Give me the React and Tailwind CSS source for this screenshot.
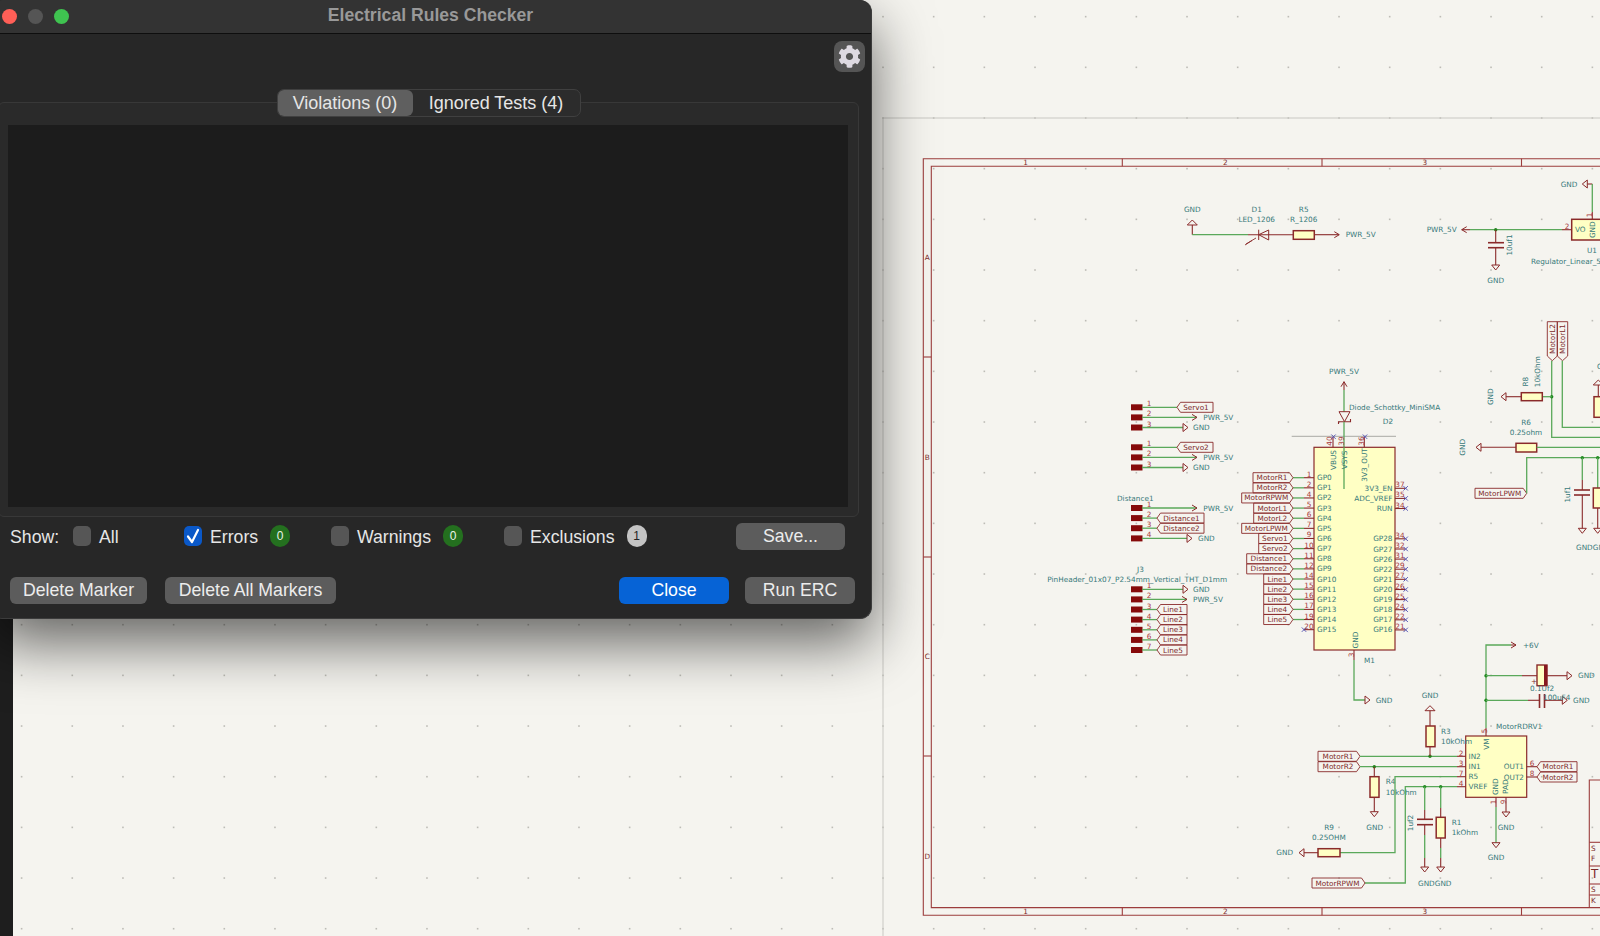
import React from "react";
import { FaCog } from "react-icons/fa";

const RED = "#8a2a2a";
const GREEN = "#5aa85a";
const TEAL = "#37797a";
const LBL = "#7d2a2a";
const PIN = "#a83a3a";
const FILL = "#ffffc4";

const W = ({ p }) => <polyline points={p} fill="none" stroke={GREEN} strokeWidth="1.3" />;
const R = ({ p, w = 1.1 }) => <polyline points={p} fill="none" stroke={RED} strokeWidth={w} />;
const T = ({ x, y, a = "start", c = TEAL, rot, s = 7.3, children }) => (
  <text
    x={x}
    y={y}
    textAnchor={a}
    dominantBaseline="central"
    fill={c}
    fontSize={s}
    fontFamily="'DejaVu Sans', sans-serif"
    transform={rot ? `rotate(-90 ${x} ${y})` : undefined}
  >
    {children}
  </text>
);
const J = ({ x, y }) => <circle cx={x} cy={y} r="1.7" fill="#1f8a1f" />;
const N = ({ x, y, a = "middle", rot, children }) => (
  <T x={x} y={y} a={a} c={PIN} rot={rot} s={7.3}>{children}</T>
);
const X = ({ x: xs, y: ys }) => {
  const x = Number(xs);
  const y = Number(ys);
  return (
    <g stroke="#4a4ab0" strokeWidth="0.9">
      <line x1={x - 2.2} y1={y - 2.2} x2={x + 2.2} y2={y + 2.2} />
      <line x1={x - 2.2} y1={y + 2.2} x2={x + 2.2} y2={y - 2.2} />
    </g>
  );
};
const G = ({ x: xs, y: ys, d }) => {
  const x = Number(xs);
  const y = Number(ys);
  const pts = {
    r: `${x},${y - 4} ${x + 5},${y} ${x},${y + 4}`,
    l: `${x},${y - 4} ${x - 5},${y} ${x},${y + 4}`,
    d: `${x - 4},${y} ${x},${y + 5} ${x + 4},${y}`,
    u: `${x - 5},${y} ${x},${y - 5} ${x + 5},${y}`,
  }[d];
  return <polygon points={pts} fill="none" stroke={RED} strokeWidth="1" />;
};
const A = ({ x: xs, y: ys, d }) => {
  const x = Number(xs);
  const y = Number(ys);
  const pts = {
    r: `${x - 5},${y - 3} ${x},${y} ${x - 5},${y + 3}`,
    l: `${x + 5},${y - 3} ${x},${y} ${x + 5},${y + 3}`,
    u: `${x - 3},${y + 5} ${x},${y} ${x + 3},${y + 5}`,
  }[d];
  return <polyline points={pts} fill="none" stroke={RED} strokeWidth="1" />;
};
const LR = ({ x0: a, tip: b, y: c, t }) => {
  const x0 = Number(a);
  const tip = Number(b);
  const y = Number(c);
  return (
    <g>
      <polygon
        points={`${x0},${y - 5} ${tip - 3.5},${y - 5} ${tip},${y} ${tip - 3.5},${y + 5} ${x0},${y + 5}`}
        fill="none"
        stroke={RED}
        strokeWidth="0.9"
      />
      <T x={(x0 + tip - 2) / 2} y={y} a="middle" c={LBL}>{t}</T>
    </g>
  );
};
const LL = ({ tip: a, x1: b, y: c, t }) => {
  const tip = Number(a);
  const x1 = Number(b);
  const y = Number(c);
  return (
    <g>
      <polygon
        points={`${tip},${y} ${tip + 3.5},${y - 5} ${x1},${y - 5} ${x1},${y + 5} ${tip + 3.5},${y + 5}`}
        fill="none"
        stroke={RED}
        strokeWidth="0.9"
      />
      <T x={(tip + x1 + 2) / 2} y={y} a="middle" c={LBL}>{t}</T>
    </g>
  );
};
const Res = ({ x, y, w, h }) => (
  <rect x={x} y={y} width={w} height={h} fill={FILL} stroke={RED} strokeWidth="1.5" />
);
const Pad = ({ y }) => <rect x="1131" y={y - 3} width="11.5" height="6" fill="#860a0a" />;

const leftPins = [
  ["GP0", "1", "MotorR1", 1253],
  ["GP1", "2", "MotorR2", 1253],
  ["GP2", "4", "MotorRPWM", 1241.7],
  ["GP3", "5", "MotorL1", 1253.7],
  ["GP4", "6", "MotorL2", 1253.7],
  ["GP5", "7", "MotorLPWM", 1241.7],
  ["GP6", "9", "Servo1", 1258.7],
  ["GP7", "10", "Servo2", 1258.7],
  ["GP8", "11", "Distance1", 1246.7],
  ["GP9", "12", "Distance2", 1246.7],
  ["GP10", "14", "Line1", 1263.7],
  ["GP11", "15", "Line2", 1263.7],
  ["GP12", "16", "Line3", 1263.7],
  ["GP13", "17", "Line4", 1263.7],
  ["GP14", "19", "Line5", 1263.7],
  ["GP15", "20", null, 0],
];
const rightPins = [
  ["3V3_EN", "37", 488.3],
  ["ADC_VREF", "35", 498.4],
  ["RUN", "34", 508.5],
  ["GP28", "34", 538.8],
  ["GP27", "32", 549],
  ["GP26", "31", 559.1],
  ["GP22", "29", 569.2],
  ["GP21", "27", 579.3],
  ["GP20", "26", 589.5],
  ["GP19", "25", 599.6],
  ["GP18", "24", 609.7],
  ["GP17", "22", 619.8],
  ["GP16", "21", 629.9],
];

function Connector({ rows }) {
  return rows.map((r, i) => (
    <g key={i}>
      <Pad y={r.y} />
      <W p={`1142,${r.y} ${r.to},${r.y}`} />
      <N x="1149" y={r.y - 3.5}>{i + 1}</N>
      {r.label && <LL tip={r.to} x1={r.end} y={r.y} t={r.label} />}
      {r.gnd && <><G x={r.to} y={r.y} d="r" /><T x={r.tx} y={r.y}>GND</T></>}
      {r.pwr && <><A x={r.to} y={r.y} d="r" /><T x={r.tx} y={r.y}>PWR_5V</T></>}
    </g>
  ));
}

function Schematic() {
  const dots = [];
  for (let i = -18; i < 15; i++) {
    for (let j = -2; j < 17; j++) {
      dots.push(<rect key={`${i}-${j}`} x={883 + i * 50.67 - 0.8} y={118 + j * 50.67 - 0.8} width="1.6" height="1.6" fill="#bdbcb6" />);
    }
  }
  const ticksX = [1122.3, 1322, 1521.5];
  const ticksY = [357, 557, 756];
  return (
    <svg viewBox="13 0 1587 936" className="block w-full h-full">
      {dots}
      <line x1="883" y1="118" x2="1600" y2="118" stroke="#c9c8c3" strokeWidth="1" />
      <line x1="883" y1="118" x2="883" y2="936" stroke="#c9c8c3" strokeWidth="1" />

      {/* Sheet frame */}
      <g fill="none" stroke="#9c3c3c" strokeWidth="1.1">
        <polyline points="1600,158.7 923.3,158.7 923.3,915.3 1600,915.3" />
        <polyline points="1600,166.3 931.3,166.3 931.3,907.6 1600,907.6" />
        {ticksX.map((x) => (
          <g key={x}>
            <line x1={x} y1="158.7" x2={x} y2="166.3" />
            <line x1={x} y1="907.6" x2={x} y2="915.3" />
          </g>
        ))}
        {ticksY.map((y) => <line key={y} x1="923.3" y1={y} x2="931.3" y2={y} />)}
      </g>
      {["1", "2", "3"].map((t, i) => (
        <g key={t}>
          <T x={1025.7 + i * 199.6} y="162.6" a="middle" c={LBL}>{t}</T>
          <T x={1025.7 + i * 199.6} y="911.5" a="middle" c={LBL}>{t}</T>
        </g>
      ))}
      {["A", "B", "C", "D"].map((t, i) => (
        <T key={t} x="927.3" y={257.5 + i * 199.5} a="middle" c={LBL}>{t}</T>
      ))}

      {/* Title block */}
      <g fill="none" stroke="#9c3c3c" strokeWidth="1.1">
        <polyline points="1600,780 1589.3,780 1589.3,907.6" />
        <line x1="1589.3" y1="842.3" x2="1600" y2="842.3" />
        <line x1="1589.3" y1="866" x2="1600" y2="866" />
        <line x1="1589.3" y1="884" x2="1600" y2="884" />
        <line x1="1589.3" y1="895" x2="1600" y2="895" />
      </g>
      <T x="1591" y="848" c={LBL}>S</T>
      <T x="1591" y="858.7" c={LBL}>F</T>
      <T x="1591" y="874" c={LBL} s={12}>T</T>
      <T x="1591" y="889" c={LBL}>S</T>
      <T x="1591" y="900" c={LBL}>K</T>

      {/* LED */}
      <T x="1192.3" y="209.3" a="middle">GND</T>
      <G x="1192.3" y="225" d="u" />
      <R p="1192.3,225 1192.3,234.7" />
      <W p="1192.3,234.7 1248,234.7" />
      <R p="1248,234.7 1293.3,234.7" />
      <polygon points="1268.7,230 1258.7,234.7 1268.7,240" fill="none" stroke={RED} strokeWidth="1" />
      <line x1="1258.7" y1="229.7" x2="1258.7" y2="240" stroke={RED} strokeWidth="1" />
      <R p="1256,238 1246,244" w={0.9} />
      <R p="1252,240.5 1245,245" w={0.9} />
      <T x="1256.7" y="209.3" a="middle">D1</T>
      <T x="1256.7" y="219.3" a="middle">LED_1206</T>
      <T x="1303.7" y="209.3" a="middle">R5</T>
      <T x="1303.7" y="219.3" a="middle">R_1206</T>
      <Res x="1293.3" y="230.7" w="21" h="8.6" />
      <R p="1314.3,234.7 1339,234.7" />
      <A x="1339.3" y="234.7" d="r" />
      <T x="1345.7" y="234.7">PWR_5V</T>

      {/* Regulator */}
      <T x="1569" y="184" a="middle">GND</T>
      <G x="1587.3" y="184" d="l" />
      <R p="1587.3,184 1592.3,184" />
      <W p="1592.3,184 1592.3,212" />
      <R p="1592.3,212 1592.3,219.3" />
      <N x="1589" y="215" rot>1</N>
      <rect x="1571.7" y="219.3" width="40" height="20.7" fill={FILL} stroke={RED} strokeWidth="1.5" />
      <T x="1575" y="229.7">VO</T>
      <T x="1592.3" y="229.7" a="middle" rot>GND</T>
      <N x="1567" y="226">2</N>
      <A x="1461.7" y="229.7" d="l" />
      <R p="1461.7,229.7 1470,229.7" />
      <W p="1470,229.7 1562,229.7" />
      <R p="1562,229.7 1571.7,229.7" />
      <T x="1426.7" y="229.7">PWR_5V</T>
      <J x="1495.7" y="229.7" />
      <R p="1495.7,229.7 1495.7,242.7" />
      <R p="1488,242.7 1504,242.7" w={1.6} />
      <R p="1488,247.7 1504,247.7" w={1.6} />
      <R p="1495.7,247.7 1495.7,265" />
      <G x="1495.7" y="265" d="d" />
      <T x="1495.7" y="280" a="middle">GND</T>
      <T x="1509.3" y="245" a="middle" rot>10uf1</T>
      <T x="1592" y="250" a="middle">U1</T>
      <T x="1531" y="261.3">Regulator_Linear_5V</T>

      {/* Motor L */}
      <polygon points="1547.3,321.7 1557.3,321.7 1557.3,356 1552.3,360.7 1547.3,356" fill="none" stroke={RED} strokeWidth="0.9" />
      <polygon points="1557.3,321.7 1567.7,321.7 1567.7,356 1562.5,360.7 1557.3,356" fill="none" stroke={RED} strokeWidth="0.9" />
      <T x="1552.3" y="339" a="middle" c={LBL} rot>MotorL2</T>
      <T x="1562.5" y="339" a="middle" c={LBL} rot>MotorL1</T>
      <W p="1551.7,360.7 1551.7,437.3 1600,437.3" />
      <W p="1562.3,360.7 1562.3,427.3 1600,427.3" />
      <J x="1551.7" y="396.7" />
      <W p="1542.3,396.7 1551.7,396.7" />
      <Res x="1521.3" y="392.7" w="21" h="8" />
      <R p="1506,396.7 1521.3,396.7" />
      <G x="1506" y="396.7" d="l" />
      <T x="1491" y="396.7" a="middle" rot>GND</T>
      <T x="1526" y="381.7" a="middle" rot>R8</T>
      <T x="1537.3" y="371.7" a="middle" rot>10kOhm</T>
      <T x="1597" y="366.7">G</T>
      <G x="1598.3" y="385" d="u" />
      <R p="1598.3,385 1598.3,397" />
      <Res x="1594" y="396.7" w="10" h="20.6" />
      <T x="1526" y="422.3" a="middle">R6</T>
      <T x="1526" y="432.3" a="middle">0.25ohm</T>
      <Res x="1516" y="443.3" w="20.7" h="8.7" />
      <R p="1481,447.3 1516,447.3" />
      <G x="1481" y="447.3" d="l" />
      <T x="1462.3" y="447.3" a="middle" rot>GND</T>
      <W p="1536.7,447.3 1600,447.3" />
      <LR x0="1475" tip="1526.7" y="493.3" t="MotorLPWM" />
      <W p="1526.7,493.3 1526.7,457.7 1600,457.7" />
      <J x="1582.3" y="457.7" />
      <J x="1597.7" y="457.7" />
      <W p="1582.3,457.7 1582.3,480" />
      <R p="1582.3,480 1582.3,490" />
      <R p="1574,490 1590,490" w={1.6} />
      <R p="1574,495 1590,495" w={1.6} />
      <R p="1582.3,495 1582.3,528.3" />
      <G x="1582.3" y="528.3" d="d" />
      <T x="1567.7" y="494.3" a="middle" rot>1uf1</T>
      <W p="1597.7,457.7 1597.7,488" />
      <Res x="1593.3" y="488" w="10" h="20" />
      <R p="1597.7,508 1597.7,528.3" />
      <G x="1597.7" y="528.3" d="d" />
      <T x="1576" y="547.7">GNDGND</T>

      {/* Connectors */}
      <Connector rows={[
        { y: 407.3, to: 1177, label: "Servo1", end: 1213 },
        { y: 417.4, to: 1197, pwr: true, tx: 1203.3 },
        { y: 427.5, to: 1183, gnd: true, tx: 1193 },
      ]} />
      <Connector rows={[
        { y: 447.3, to: 1177, label: "Servo2", end: 1213 },
        { y: 457.4, to: 1197, pwr: true, tx: 1203.3 },
        { y: 467.5, to: 1183, gnd: true, tx: 1193 },
      ]} />
      <T x="1117" y="498">Distance1</T>
      <Connector rows={[
        { y: 508, to: 1197, pwr: true, tx: 1203.3 },
        { y: 518.1, to: 1157, label: "Distance1", end: 1204 },
        { y: 528.2, to: 1157, label: "Distance2", end: 1204 },
        { y: 538.4, to: 1187, gnd: true, tx: 1198 },
      ]} />
      <T x="1137" y="569">J3</T>
      <T x="1227" y="579" a="end">PinHeader_01x07_P2.54mm_Vertical_THT_D1mm</T>
      <Connector rows={[
        { y: 589.3, to: 1183, gnd: true, tx: 1193 },
        { y: 599.4, to: 1187, pwr: true, tx: 1193 },
        { y: 609.5, to: 1157, label: "Line1", end: 1187 },
        { y: 619.6, to: 1157, label: "Line2", end: 1187 },
        { y: 629.8, to: 1157, label: "Line3", end: 1187 },
        { y: 639.9, to: 1157, label: "Line4", end: 1187 },
        { y: 650, to: 1157, label: "Line5", end: 1187 },
      ]} />

      {/* Pico M1 */}
      <line x1="1291.7" y1="436.3" x2="1396" y2="436.3" stroke="#a9a9a4" strokeWidth="1" />
      <T x="1344" y="371" a="middle">PWR_5V</T>
      <A x="1344" y="381.7" d="u" />
      <R p="1344,381.7 1344,390" />
      <W p="1344,390 1344,411.7" />
      <polygon points="1339,411.7 1350,411.7 1344.5,421.7" fill="none" stroke={RED} strokeWidth="1" />
      <R p="1338.5,424 1338.5,421.7 1350.5,421.7 1350.5,419" />
      <W p="1344,421.7 1344,447.3" />
      <T x="1349" y="407">Diode_Schottky_MiniSMA</T>
      <T x="1388" y="421" a="middle">D2</T>
      <rect x="1314" y="447.3" width="81" height="202.7" fill={FILL} stroke={RED} strokeWidth="1.2" />
      <W p="1344,447.3 1344,489" />
      <R p="1333,437 1333,447.3" />
      <R p="1364.3,437 1364.3,447.3" />
      <X x="1333.5" y="436.7" />
      <X x="1365" y="436.7" />
      <N x="1329.5" y="441" rot>40</N>
      <N x="1341" y="441" rot>39</N>
      <N x="1361" y="441" rot>36</N>
      <T x="1333.5" y="460" a="middle" rot>VBUS</T>
      <T x="1344.5" y="460" a="middle" rot>VSYS</T>
      <T x="1364.3" y="465" a="middle" rot>3V3_OUT</T>
      <T x="1355" y="640" a="middle" rot>GND</T>
      {leftPins.map(([name, num, lbl, x0], i) => {
        const y = 477.7 + i * 10.13;
        return (
          <g key={name}>
            <R p={`1304,${y} 1314,${y}`} />
            <N x="1309" y={y - 3.5}>{num}</N>
            <T x="1317" y={y}>{name}</T>
            {lbl ? (
              <>
                <W p={`1293,${y} 1304,${y}`} />
                <LR x0={x0} tip={1293} y={y} t={lbl} />
              </>
            ) : (
              <X x={1304} y={y} />
            )}
          </g>
        );
      })}
      {rightPins.map(([name, num, y]) => (
        <g key={name}>
          <R p={`1395,${y} 1405,${y}`} />
          <N x="1400" y={y - 3.5}>{num}</N>
          <T x="1392.5" y={y} a="end">{name}</T>
          <X x={1405.7} y={y} />
        </g>
      ))}
      <R p="1354,650 1354,660" />
      <W p="1354,660 1354,700 1365,700" />
      <N x="1351" y="655" rot>3</N>
      <T x="1364" y="660">M1</T>
      <G x="1365" y="700" d="r" />
      <T x="1375.7" y="700">GND</T>

      {/* Motor driver power */}
      <W p="1486,728 1486,645 1511,645" />
      <R p="1486,728 1486,736" />
      <A x="1516" y="645" d="r" />
      <R p="1511,645 1516,645" />
      <T x="1523" y="645">+6V</T>
      <J x="1486" y="675.7" />
      <J x="1486" y="700.3" />
      <W p="1486,675.7 1522,675.7" />
      <R p="1522,675.7 1537,675.7" />
      <rect x="1537" y="665" width="10" height="20.7" fill={FILL} stroke={RED} strokeWidth="1.4" />
      <rect x="1544" y="665" width="3.2" height="20.7" fill="#86191f" />
      <R p="1547,675.7 1567,675.7" />
      <G x="1567" y="675.7" d="r" />
      <T x="1578" y="675.7">GND</T>
      <T x="1531" y="681" c={LBL}>+</T>
      <T x="1530" y="688">0.1Uf2</T>
      <W p="1486,700.3 1528,700.3" />
      <R p="1528,700.3 1539.5,700.3" />
      <R p="1539.5,694 1539.5,708" w={1.6} />
      <R p="1544.5,694 1544.5,708" w={1.6} />
      <R p="1544.5,700.3 1562.3,700.3" />
      <G x="1562.3" y="700.3" d="r" />
      <T x="1573" y="700.3">GND</T>
      <T x="1543" y="697">100uF4</T>
      <T x="1496" y="726">MotorRDRV1</T>

      {/* Driver chip */}
      <rect x="1465.7" y="736" width="61" height="61.3" fill={FILL} stroke={RED} strokeWidth="1.2" />
      <N x="1484" y="731" rot>5</N>
      <T x="1486.7" y="744" a="middle" rot>VM</T>
      {[["IN2", "2", 756.3], ["IN1", "3", 766.7], ["R5", "7", 776.7], ["VREF", "4", 786.7]].map(([n, num, y]) => (
        <g key={n}>
          <R p={`1457,${y} 1465.7,${y}`} />
          <N x="1461" y={y - 3.3}>{num}</N>
          <T x="1468.5" y={y}>{n}</T>
        </g>
      ))}
      <T x="1524" y="766.7" a="end">OUT1</T>
      <T x="1524" y="777" a="end">OUT2</T>
      <R p="1526.7,766.7 1537,766.7" />
      <R p="1526.7,777 1537,777" />
      <N x="1532" y="763">6</N>
      <N x="1532" y="773.5">8</N>
      <LL tip="1537" x1="1577" y="766.7" t="MotorR1" />
      <LL tip="1537" x1="1577" y="777" t="MotorR2" />
      <T x="1496" y="786.7" a="middle" rot>GND</T>
      <T x="1506" y="786.7" a="middle" rot>PAD</T>
      <R p="1496,797 1496,807" />
      <W p="1496,807 1496,842.7" />
      <G x="1496" y="842.7" d="d" />
      <N x="1493" y="802" rot>1</N>
      <T x="1496" y="857.7" a="middle">GND</T>
      <R p="1506,797 1506,812" />
      <G x="1506" y="812" d="d" />
      <N x="1503" y="802" rot>9</N>
      <T x="1506" y="827.3" a="middle">GND</T>

      {/* Driver inputs */}
      <LR x0="1318" tip="1360" y="756.3" t="MotorR1" />
      <LR x0="1318" tip="1360" y="766.7" t="MotorR2" />
      <W p="1360,756.3 1457,756.3" />
      <W p="1360,766.7 1457,766.7" />
      <J x="1430" y="756.3" />
      <J x="1374.3" y="766.7" />
      <R p="1430,756.3 1430,746.7" />
      <Res x="1426" y="726" w="9" h="20.7" />
      <R p="1430,726 1430,710.7" />
      <G x="1430" y="710.7" d="u" />
      <T x="1430" y="695.7" a="middle">GND</T>
      <T x="1441" y="731">R3</T>
      <T x="1441" y="741">10kOhm</T>
      <R p="1374.3,766.7 1374.3,776.7" />
      <Res x="1370" y="776.7" w="9" h="20.6" />
      <R p="1374.3,797.3 1374.3,811.7" />
      <G x="1374.3" y="811.7" d="d" />
      <T x="1374.7" y="827.3" a="middle">GND</T>
      <T x="1385.7" y="781.3">R4</T>
      <T x="1385.7" y="792">10kOhm</T>
      <W p="1457,776.7 1395,776.7 1395,852.7 1340,852.7" />
      <Res x="1318" y="848.7" w="22" h="8" />
      <R p="1304,852.7 1318,852.7" />
      <G x="1304" y="852.7" d="l" />
      <T x="1293" y="852.7" a="end">GND</T>
      <T x="1329" y="827.3" a="middle">R9</T>
      <T x="1329" y="837.3" a="middle">0.25OHM</T>
      <W p="1457,786.7 1405.3,786.7 1405.3,883 1365,883" />
      <LR x0="1312" tip="1365" y="883" t="MotorRPWM" />
      <J x="1424.7" y="786.7" />
      <J x="1440.7" y="786.7" />
      <W p="1424.7,786.7 1424.7,810" />
      <R p="1424.7,810 1424.7,819.3" />
      <R p="1417,819.3 1433,819.3" w={1.6} />
      <R p="1417,824.7 1433,824.7" w={1.6} />
      <R p="1424.7,824.7 1424.7,835" />
      <W p="1424.7,835 1424.7,858" />
      <R p="1424.7,858 1424.7,867" />
      <G x="1424.7" y="867" d="d" />
      <T x="1410.7" y="823" a="middle" rot>1uf2</T>
      <W p="1440.7,786.7 1440.7,808" />
      <R p="1440.7,808 1440.7,817.3" />
      <Res x="1436.2" y="817.3" w="9" h="20.7" />
      <R p="1440.7,838 1440.7,848" />
      <W p="1440.7,848 1440.7,858" />
      <R p="1440.7,858 1440.7,867" />
      <G x="1440.7" y="867" d="d" />
      <T x="1451.7" y="822">R1</T>
      <T x="1451.7" y="832.3">1kOhm</T>
      <T x="1418" y="883">GNDGND</T>
    </svg>
  );
}

const Check = ({ on, children, className, badge }) => (
  <div className={`flex items-center ${className}`}>
    <span className={`w-[18px] h-[20px] -mt-[1px] rounded-[5px] flex items-center justify-center ${on ? "bg-[#0a58c8]" : "bg-[#565656]"}`}>
      {on && (
        <svg viewBox="0 0 18 20" className="w-[18px] h-[20px]">
          <path d="M4 10.5 L8 16 L14 4" fill="none" stroke="#fff" strokeWidth="2.2" strokeLinecap="round" strokeLinejoin="round" />
        </svg>
      )}
    </span>
    <span className="ml-[8px] pt-[2px]">{children}</span>
    {badge}
  </div>
);
const Badge = ({ children, gray, className }) => (
  <span className={`w-[20px] h-[22px] rounded-full flex items-center justify-center text-[12px] -mt-[2px] ${gray ? "bg-[#c4c4c4] text-[#222]" : "bg-[#24701f] text-[#e8f4e8]"} ${className}`}>
    {children}
  </span>
);
const Btn = ({ children, className }) => (
  <button className={`h-[27px] rounded-[6px] text-[17.7px] leading-none flex items-center justify-center ${className}`}>
    {children}
  </button>
);
const GRAY = "bg-[#5c5c5c] text-[#ececec]";

export default function App() {
  return (
    <div className="relative w-[1600px] h-[936px] overflow-hidden flex bg-[#f5f4ef] font-['Liberation_Sans',sans-serif]">
      <div className="w-[13px] shrink-0 bg-[#1e1e1e]" />
      <div className="flex-1 min-w-0">
        <Schematic />
      </div>

      <div className="absolute left-[-10px] top-0 w-[882px] h-[619px] rounded-xl bg-[#272727] flex flex-col shadow-[0_24px_60px_rgba(0,0,0,0.6)] border border-[#3c3c3c] border-t-0 border-l-0 text-[17.7px] text-[#e6e6e6]">
        <div className="relative h-[34px] shrink-0 rounded-t-xl bg-[#333333] border-b border-[#0e0e0e] flex items-center pl-[12px] gap-[11px]">
          <span className="w-[15px] h-[15px] rounded-full bg-[#ff5f57]" />
          <span className="w-[15px] h-[15px] rounded-full bg-[#555555]" />
          <span className="w-[15px] h-[15px] rounded-full bg-[#3fc350]" />
          <span className="absolute inset-0 flex items-center justify-center font-bold text-[#999999] text-[17.6px] pb-[2px]">
            Electrical Rules Checker
          </span>
        </div>

        <div className="flex justify-end pt-[7px] pr-[6px]">
          <button className="w-[31px] h-[31px] rounded-lg bg-[#555555] flex items-center justify-center">
            <FaCog className="text-[#dedae2] w-[23px] h-[23px]" />
          </button>
        </div>

        <div className="ml-[8px] w-[861px] flex flex-col mt-[17px]">
          <div className="self-center z-10 flex h-[28px] w-[304px] rounded-[7px] bg-[#2c2c2c] border border-[#404040] text-[18px]">
            <div className="w-[135px] rounded-[6px] bg-[#5f5f5f] flex items-center justify-center">Violations (0)</div>
            <div className="flex-1 flex items-center justify-center">Ignored Tests (4)</div>
          </div>
          <div className="-mt-[15px] h-[415px] rounded-[6px] border border-[#383838] bg-[#2a2a2a] pt-[22px] pl-[9px] pr-[10px] pb-[9px]">
            <div className="h-full bg-[#1c1c1c]" />
          </div>
        </div>

        <div className="flex items-center h-[27px] mt-[6px] pl-[20px]">
          <span className="w-[63px] pt-[2px]">Show:</span>
          <Check className="w-[111px]">All</Check>
          <Check on className="w-[147px]" badge={<Badge className="ml-[12px]">0</Badge>}>Errors</Check>
          <Check className="w-[173px]" badge={<Badge className="ml-[12px]">0</Badge>}>Warnings</Check>
          <Check className="w-[232px]" badge={<Badge gray className="ml-[12px]">1</Badge>}>Exclusions</Check>
          <Btn className={`w-[109px] ${GRAY}`}>Save...</Btn>
        </div>

        <div className="flex items-center mt-[27px] pl-[20px] pr-[16px]">
          <Btn className={`w-[137px] ${GRAY}`}>Delete Marker</Btn>
          <Btn className={`w-[171px] ml-[18px] ${GRAY}`}>Delete All Markers</Btn>
          <Btn className="w-[110px] ml-auto bg-[#0663d6] text-white">Close</Btn>
          <Btn className={`w-[110px] ml-[16px] ${GRAY}`}>Run ERC</Btn>
        </div>
      </div>
    </div>
  );
}
